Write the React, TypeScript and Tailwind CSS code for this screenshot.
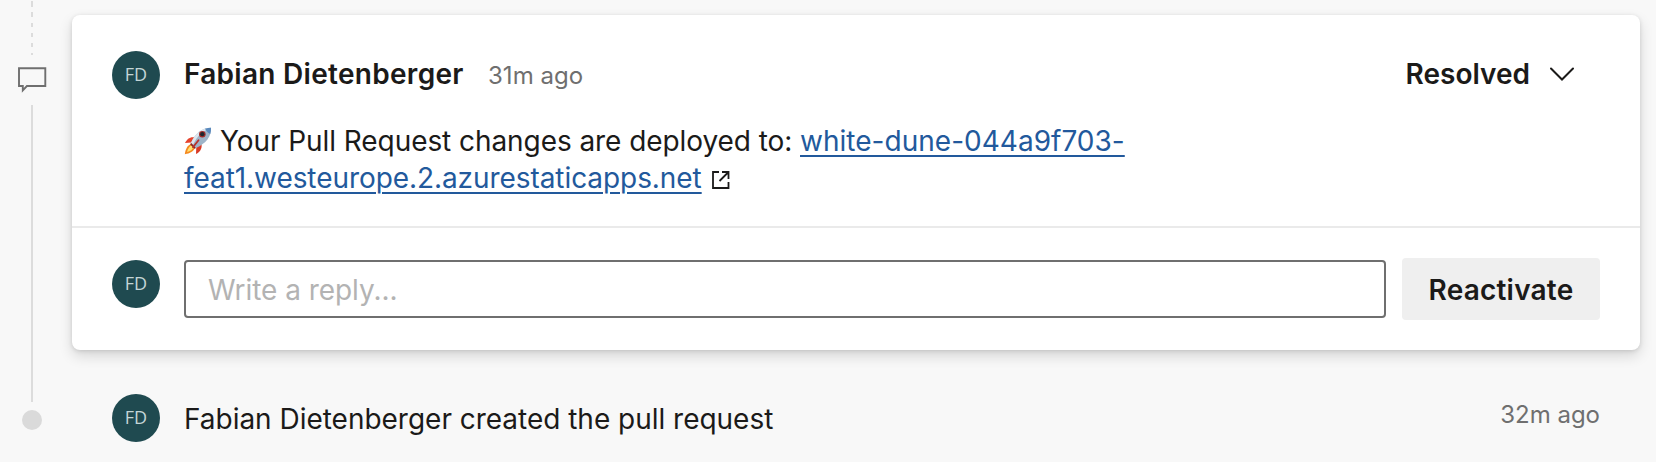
import React from "react";

function Avatar({ className = "" }: { className?: string }) {
  return (
    <div
      className={`flex h-12 w-12 shrink-0 items-center justify-center rounded-full bg-[#1f4a50] pb-[2px] text-[18px] leading-none text-[#c3d5d6] ${className}`}
    >
      <span className="font-['Open_Sans',sans-serif]">FD</span>
    </div>
  );
}

function Rocket() {
  return (
    <svg role="img" aria-label="rocket" viewBox="0 0 28 28" className="mr-[8px] inline-block h-7 w-7 align-[-4px]">
      <path d="M11 10.500C6 9.500 3 12 1 16l6.500-.5z" fill="#e5432d" />
      <path d="M17.500 17c.8 4.500-1.500 8-5.500 10l.3-7z" fill="#d93a26" />
      <path d="M7.500 17C3.500 18 1.500 22 .8 27.200 6 26.500 9.500 24.500 11 20.500z" fill="#f58a1f" />
      <path d="M8 18c-2.500 1.200-4 3.500-5 7 3.500-.8 5.500-2.300 6.800-5z" fill="#ffe272" />
      <path d="M27 .8C19 .8 12 5 7 15.800l5 5.200C22 16.500 27.500 9.500 27 .8z" fill="#9eb4c8" />
      <path d="M27 .8C19 .8 12 5 7 15.800l2 2C13 9 19 4 27 .8z" fill="#dce6ee" />
      <path d="M21 1.700c1.200 2.200 2.900 4 5.200 5.200.7-2 .9-4 .8-6.100-2.100 0-4.100.3-6 .9z" fill="#5989bd" />
      <path d="m7 15.800 5 5.200-1.500.8-4.300-4.400z" fill="#8b2923" />
      <circle cx="18.300" cy="7.200" r="3.300" fill="#a22b28" />
      <circle cx="18.300" cy="7.200" r="2.100" fill="#1f2730" />
      <path d="m14.500 13.200-5.500 7" stroke="#b9322b" strokeWidth="1.800" strokeLinecap="round" />
    </svg>
  );
}

function Timeline() {
  return (
    <div className="flex w-[72px] shrink-0 flex-col items-center pr-2">
      <svg width="2" height="56" viewBox="0 0 2 56" fill="#dcdcdc">
        <path d="M0 1h2v6H0zM0 12h2v5H0zM0 23h2v4H0zM0 33h2v4H0zM0 43h2v4H0zM0 53h2v2H0z" />
      </svg>
      <svg width="30" height="28" viewBox="0 0 30 28" className="mt-[10px]" fill="none" stroke="#6f6f6f" strokeWidth="1.900">
        <path d="M2 2.300h26.300v17.700H9.900L5.800 24.300V20H2z" />
      </svg>
      <div className="mt-[11px] h-[297px] w-[2px] bg-[#dcdcdc]" />
      <div className="mt-2 h-5 w-5 rounded-full bg-[#dadada]" />
    </div>
  );
}

export default function App() {
  return (
    <div className="flex h-[462px] w-[1656px] overflow-hidden bg-[#f8f8f8] font-[Inter,sans-serif] text-[28px] text-[#1b1a19]">
      <Timeline />
      <main className="w-[1568px] shrink-0 pt-[15px]">
        <section className="h-[335px] rounded-lg bg-white shadow-[0_6px_14px_rgba(0,0,0,0.14),0_1px_4px_rgba(0,0,0,0.12)]">
          <div className="h-[211px] px-10 pt-9">
            <header className="flex h-12 items-center">
              <Avatar />
              <span className="ml-6 w-[304px] whitespace-nowrap pb-[2px] font-semibold tracking-[0.29px]">Fabian Dietenberger</span>
              <span className="pt-px text-[24px] tracking-[0.05px] text-[#6f6f6f]">31m ago</span>
              <button className="ml-auto mr-[26px] flex items-center gap-5 pb-[2px] font-semibold">
                Resolved
                <svg width="24" height="14" viewBox="0 0 24 14" fill="none" stroke="currentColor" strokeWidth="2" strokeLinecap="round">
                  <path d="M1 1.500l11 11L23 1.500" />
                </svg>
              </button>
            </header>
            <div className="ml-[72px] mt-[24px] whitespace-nowrap leading-[37px] tracking-[-0.07px]">
              <Rocket />
              <span>Your Pull Request changes are deployed to: </span>
              <a href="#" className="text-[#22599c] underline decoration-2 underline-offset-[4px]">
                <span className="tracking-[0.02px]">white-dune-044a9f703-</span>
                <br />
                feat1.westeurope.2.azurestaticapps.net
              </a>
              <svg width="18" height="18" viewBox="0 0 18 18" className="ml-[10px] inline-block align-[-1px]" fill="none" stroke="currentColor" strokeWidth="1.800">
                <path d="M7 1H1v16h15.500v-6M10 1h6.500v7M16.500 1 7.500 10" />
              </svg>
            </div>
          </div>
          <div className="flex h-[124px] items-start border-t-2 border-[#eaeaea] px-10 pt-[30px]">
            <Avatar className="mt-[2px]" />
            <input
              placeholder="Write a reply..."
              className="ml-6 mt-[2px] h-[58px] w-[1202px] rounded-[4px] border-2 border-[#6f6f6f] bg-white px-[22px] pt-[2px] tracking-[-0.05px] placeholder:text-[#b3b3b3]"
            />
            <button className="ml-4 h-[62px] w-[198px] rounded-[4px] bg-[#efefef] pt-[2px] font-semibold tracking-[0.2px]">Reactivate</button>
          </div>
        </section>
        <div className="mt-11 flex h-12 items-center px-10">
          <Avatar />
          <span className="ml-6 pt-[2px] tracking-[-0.02px]">Fabian Dietenberger created the pull request</span>
          <span className="ml-auto pb-[6px] text-[24px] text-[#6f6f6f]">32m ago</span>
        </div>
      </main>
    </div>
  );
}
